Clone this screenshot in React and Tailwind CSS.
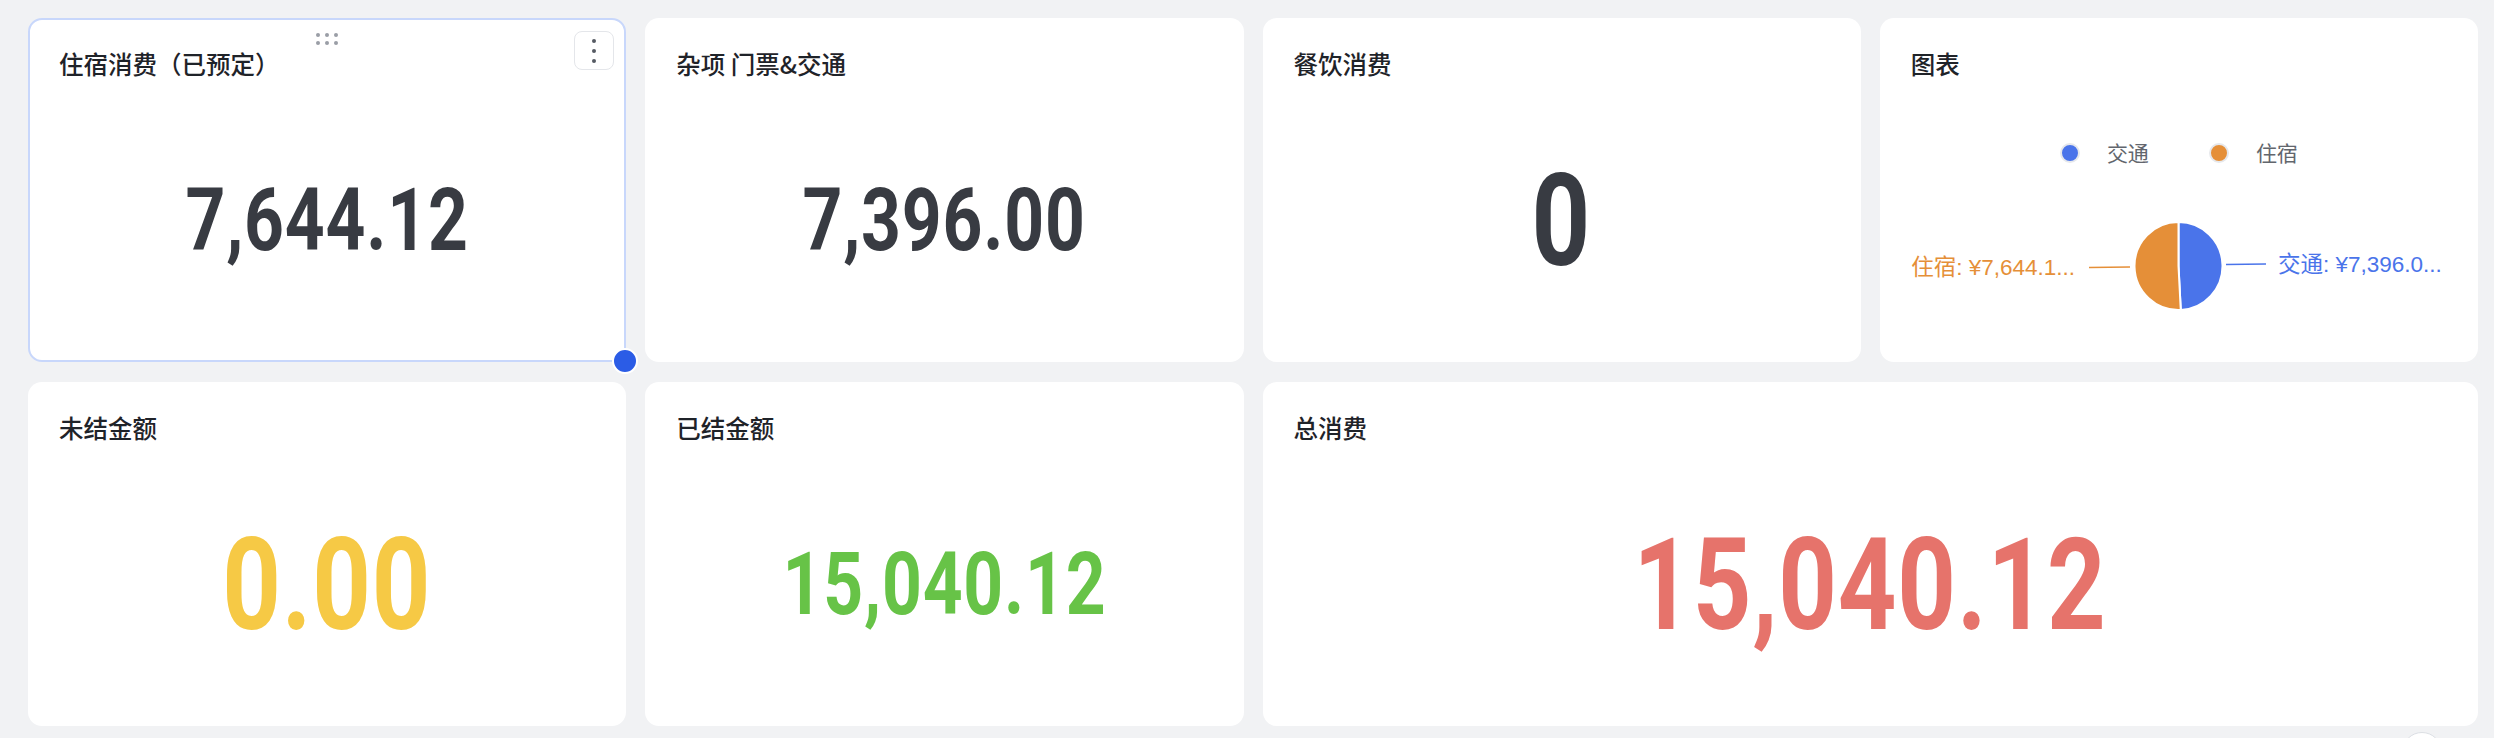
import React from 'react';

const titleFont = "font-['Noto_Sans_CJK_SC','Noto_Sans',sans-serif]";
const numFont = "font-['Roboto','Liberation_Sans',sans-serif]";

const StatCard = ({ title, value, color, big, selected, className = '' }) => (
  <div
    className={`relative flex flex-col rounded-[14px] bg-white border-2 ${
      selected ? 'border-[#c8d7fb] z-10' : 'border-transparent'
    } ${className}`}
  >
    {selected && (
      <>
        {/* drag handle */}
        <div className="absolute left-1/2 top-[13px] -translate-x-1/2 grid grid-cols-3 gap-x-[5px] gap-y-[4px]">
          {[0, 1, 2, 3, 4, 5].map((i) => (
            <span key={i} className="block h-[4px] w-[4px] rounded-full bg-[#9a9ea6]" />
          ))}
        </div>
        {/* menu */}
        <div className="absolute right-[10px] top-[11px] flex h-[39px] w-[40px] flex-col items-center justify-center gap-[6px] rounded-[8px] border border-[#e4e6ea] bg-white">
          <span className="block h-[4px] w-[4px] rounded-full bg-[#555a63]" />
          <span className="block h-[4px] w-[4px] rounded-full bg-[#555a63]" />
          <span className="block h-[4px] w-[4px] rounded-full bg-[#555a63]" />
        </div>
        {/* resize handle */}
        <span className="absolute -bottom-[14px] -right-[14px] block h-[26px] w-[26px] rounded-full border-[2px] border-white bg-[#2b5ce6]" />
      </>
    )}
    <div className={`h-[38px] mt-[25px] pl-[29px] text-[24.5px] font-medium leading-[38px] text-[#1f2329] ${titleFont}`}>
      {title}
    </div>
    <div className="flex flex-1 items-center justify-center pb-[2px]">
      <span
        className={`inline-block scale-x-[0.8] ${numFont} font-bold leading-none tracking-[1px] ${
          big ? 'text-[128px]' : 'text-[87px]'
        } ${color}`}
      >
        {value}
      </span>
    </div>
  </div>
);

const ChartCard = () => {
  const cx = 298.5;
  const cy = 58;
  const r = 44;
  const blue = '#4a74ea';
  const orange = '#e58f38';
  const frac = 7396 / 15040.12;
  const a = -Math.PI / 2 + frac * Math.PI * 2;
  const ex = cx + r * Math.cos(a);
  const ey = cy + r * Math.sin(a);
  return (
    <div className="relative flex flex-col rounded-[14px] border-2 border-transparent bg-white">
      <div className={`h-[38px] mt-[25px] pl-[29px] text-[24.5px] font-medium leading-[38px] text-[#1f2329] ${titleFont}`}>
        图表
      </div>
      <div className={`mt-[54px] flex items-center justify-center text-[21px] text-[#62666d] ${titleFont}`}>
        <span className="block h-[20px] w-[20px] rounded-full border-[2px] border-[#e6e8ec] bg-[#4a74ea]" />
        <span className="ml-[27px]">交通</span>
        <span className="ml-[60px] block h-[20px] w-[20px] rounded-full border-[2px] border-[#e6e8ec] bg-[#e58f38]" />
        <span className="ml-[27px]">住宿</span>
      </div>
      <svg width="594" height="120" viewBox="0 0 594 120" className="mt-[39px] -ml-[2px]">
        <path d={`M${cx} ${cy} L${cx} ${cy - r} A${r} ${r} 0 0 1 ${ex} ${ey} Z`} fill={blue} stroke="#fff" strokeWidth="2" />
        <path d={`M${cx} ${cy} L${ex} ${ey} A${r} ${r} 0 1 1 ${cx} ${cy - r} Z`} fill={orange} stroke="#fff" strokeWidth="2" />
        <line x1="209" y1="59.5" x2="250" y2="59" stroke={orange} strokeWidth="1.6" />
        <line x1="346" y1="56.5" x2="386" y2="56" stroke={blue} strokeWidth="1.6" />
        <text
          x="195"
          y="67"
          textAnchor="end"
          fill={orange}
          fontSize="22.5"
          fontFamily="'Liberation Sans','Noto Sans CJK SC',sans-serif"
        >
          住宿: ¥7,644.1...
        </text>
        <text
          x="398"
          y="64"
          fill={blue}
          fontSize="22.5"
          fontFamily="'Liberation Sans','Noto Sans CJK SC',sans-serif"
        >
          交通: ¥7,396.0...
        </text>
      </svg>
    </div>
  );
};

export default function App() {
  return (
    <div className="relative h-[738px] w-full overflow-hidden bg-[#f1f2f4] pl-[28px] pr-[16px] pt-[18px]">
      <div className="grid grid-cols-4 grid-rows-[344px_344px] gap-x-[19px] gap-y-[20px]">
        <StatCard title="住宿消费（已预定）" value="7,644.12" color="text-[#383b42]" selected />
        <StatCard title="杂项 门票&交通" value="7,396.00" color="text-[#383b42]" />
        <StatCard title="餐饮消费" value="0" color="text-[#383b42]" big />
        <ChartCard />
        <StatCard title="未结金额" value="0.00" color="text-[#f6c945]" big />
        <StatCard title="已结金额" value="15,040.12" color="text-[#67c347]" />
        <StatCard title="总消费" value="15,040.12" color="text-[#e6736b]" big className="col-span-2" />
      </div>
      {/* floating button peeking at the bottom edge */}
      <div className="absolute left-[2402px] top-[732px] h-[40px] w-[40px] rounded-full border border-[#dcdfe4] bg-white" />
    </div>
  );
}
